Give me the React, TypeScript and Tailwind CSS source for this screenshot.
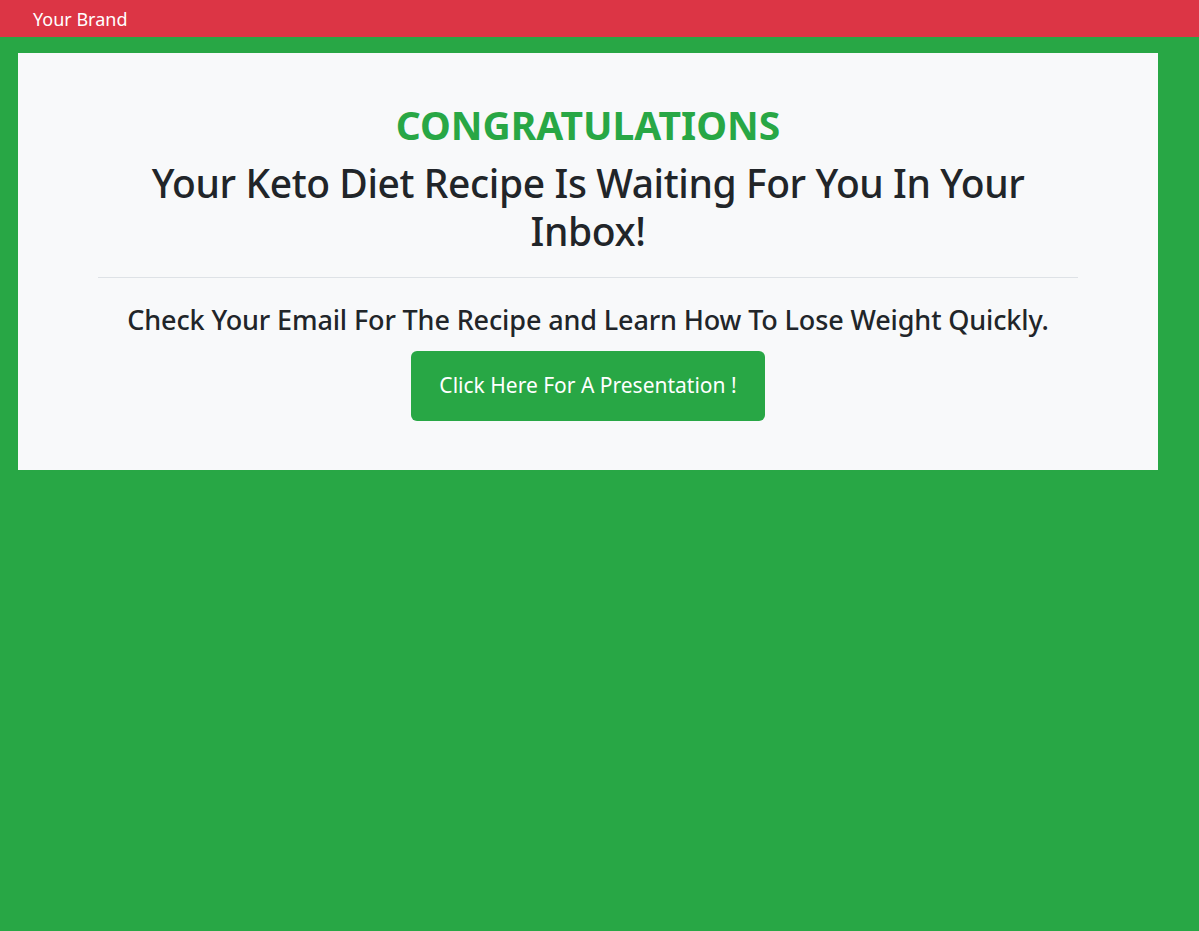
import React from "react";

export default function App() {
  return (
    <div className="min-h-[931px] w-full bg-[#28a745] font-['Noto_Sans',sans-serif]">
      <nav className="flex h-[37px] items-center bg-[#dc3545] pl-[33px]">
        <span className="text-[18px] leading-none text-white">Your Brand</span>
      </nav>
      <div className="ml-[18px] mt-[16px] w-[1140px] bg-[#f8f9fa] px-[80px] pb-[49px] pt-[48px]">
        <div className="flex flex-col items-center text-center">
          <h1 className="text-[39px] font-bold leading-[48px] text-[#28a745]">CONGRATULATIONS</h1>
          <h1 className="mt-[10px] text-[39px] font-medium leading-[48px] tracking-[-0.4px] text-[#212529]">
            Your Keto Diet Recipe Is Waiting For You In Your Inbox!
          </h1>
          <hr className="mb-[23px] mt-[22px] w-full border-t border-[#dee2e6]" />
          <h2 className="text-[27px] font-medium leading-[38px] tracking-[-0.13px] text-[#212529]">
            Check Your Email For The Recipe and Learn How To Lose Weight Quickly.
          </h2>
          <a className="mt-[12px] flex h-[70px] w-[354px] items-center justify-center rounded-[6px] bg-[#28a745] text-[21px] text-white">
            Click Here For A Presentation !
          </a>
        </div>
      </div>
    </div>
  );
}
